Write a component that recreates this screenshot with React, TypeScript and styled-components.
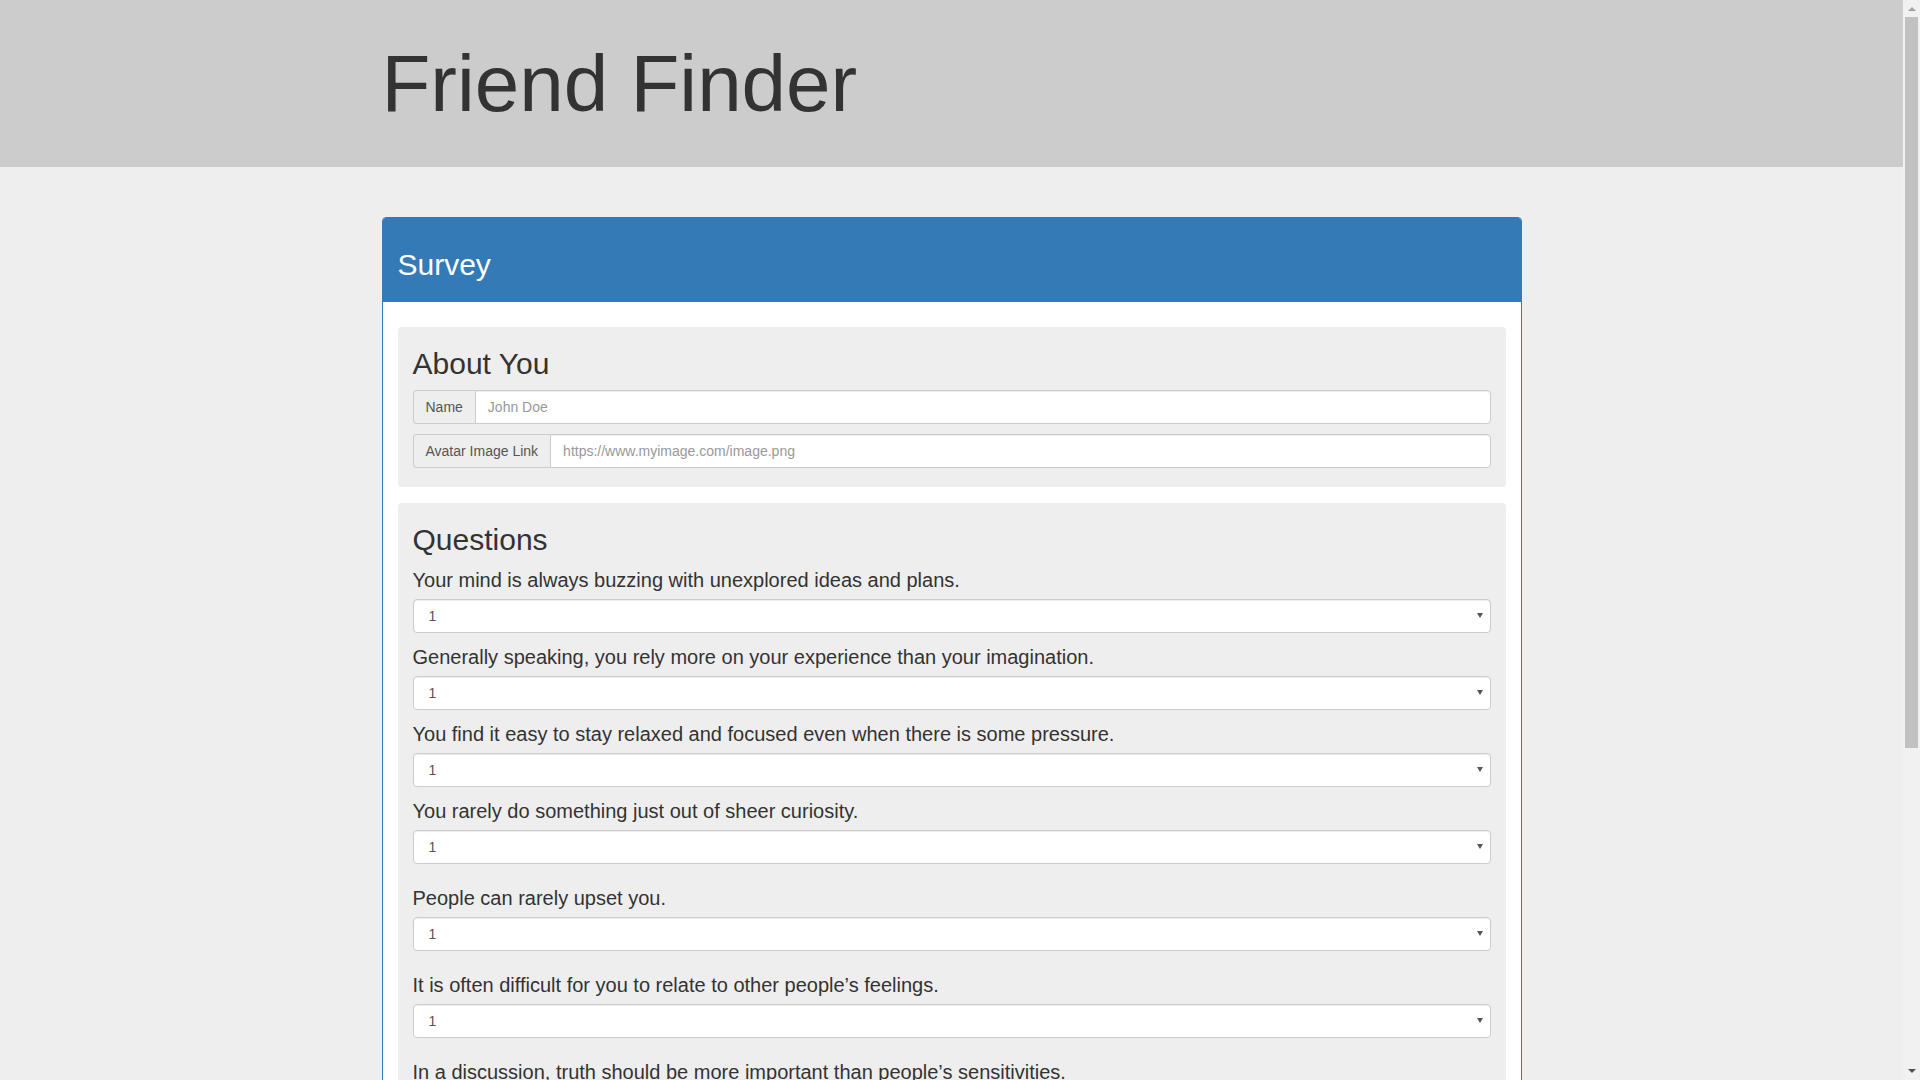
import React from "react";
import styled, { createGlobalStyle } from "styled-components";

const GlobalStyle = createGlobalStyle`
  html, body {
    margin: 0;
    padding: 0;
    background: #eeeeee;
  }
  body {
    font-family: "Liberation Sans", Arial, Helvetica, sans-serif;
    font-size: 14px;
    color: #333333;
    padding-right: 17px;
  }
  *, *::before, *::after {
    box-sizing: border-box;
  }
`;

const Jumbotron = styled.header`
  background: #cccccc;
  padding: 40px 0 39px;
  margin-bottom: 50px;
`;

const Container = styled.div`
  width: 1170px;
  margin: 0 auto;
  padding: 0 15px;
`;

const SiteTitle = styled.h1`
  margin: 0;
  font-size: 80px;
  line-height: 88px;
  font-weight: 400;
  color: #333333;
`;

const Panel = styled.section`
  background: #ffffff;
  border: 1px solid #337ab7;
  border-radius: 4px;
  margin-bottom: 62px;
`;

const PanelHeading = styled.div`
  background: #337ab7;
  color: #ffffff;
  padding: 10px 15px;
  border-bottom: 1px solid #337ab7;
  border-radius: 3px 3px 0 0;
`;

const PanelTitle = styled.h2`
  margin: 20px 0 10px;
  font-size: 30px;
  line-height: 33px;
  font-weight: 400;
`;

const PanelBody = styled.div`
  padding: 25px 15px 15px;
`;

const Well = styled.div`
  background: #eeeeee;
  border-radius: 4px;
  padding: 20px 15px 19px;
  margin-bottom: 16px;
`;

const SectionTitle = styled.h3`
  margin: 0 0 10px;
  font-size: 30px;
  line-height: 33px;
  font-weight: 400;
  color: #333333;
`;

const FieldStack = styled.div`
  display: flex;
  flex-direction: column;
  gap: 10px;
`;

const InputGroup = styled.label`
  display: flex;
  height: 34px;
`;

const Addon = styled.span`
  display: flex;
  align-items: center;
  padding: 6px 12px;
  font-size: 14px;
  color: #555555;
  background: #eeeeee;
  border: 1px solid #cccccc;
  border-right: 0;
  border-radius: 4px 0 0 4px;
  white-space: nowrap;
`;

const TextInput = styled.input`
  flex: 1;
  min-width: 0;
  height: 34px;
  padding: 6px 12px;
  font-family: inherit;
  font-size: 14px;
  color: #555555;
  background: #ffffff;
  border: 1px solid #cccccc;
  border-radius: 0 4px 4px 0;
  box-shadow: inset 0 1px 1px rgba(0, 0, 0, 0.075);
  outline: none;
  &::placeholder {
    color: #999999;
  }
`;

const Question = styled.div<{ $spaced?: boolean; $first?: boolean }>`
  display: flex;
  flex-direction: column;
  margin-top: ${(p) => (p.$first ? "0" : p.$spaced ? "20px" : "10px")};
`;

const QuestionLabel = styled.label`
  font-size: 20px;
  line-height: 28px;
  font-weight: 400;
  color: #333333;
  margin-bottom: 5px;
`;

const SelectWrap = styled.div`
  position: relative;
  &::after {
    content: "";
    position: absolute;
    right: 8px;
    top: 14px;
    width: 0;
    height: 0;
    border-left: 3px solid transparent;
    border-right: 3px solid transparent;
    border-top: 5px solid #555555;
    pointer-events: none;
  }
`;

const Select = styled.select`
  display: block;
  width: 100%;
  height: 34px;
  padding: 6px 24px 6px 15px;
  font-family: inherit;
  font-size: 14px;
  color: #555555;
  background: #ffffff;
  border: 1px solid #cccccc;
  border-radius: 4px;
  box-shadow: inset 0 1px 1px rgba(0, 0, 0, 0.075);
  appearance: none;
  -webkit-appearance: none;
  outline: none;
`;

const SubmitButton = styled.button`
  display: inline-block;
  height: 46px;
  padding: 10px 16px;
  font-family: inherit;
  font-size: 18px;
  line-height: 24px;
  color: #ffffff;
  background: #337ab7;
  border: 1px solid #2e6da4;
  border-radius: 6px;
  cursor: pointer;
`;

/* Browser-style vertical scrollbar drawn over the right edge of the viewport */
const ScrollBar = styled.div`
  position: fixed;
  top: 0;
  right: 0;
  width: 17px;
  height: 100vh;
  background: #f1f1f1;
  display: flex;
  flex-direction: column;
`;

const ScrollButton = styled.div`
  height: 17px;
  flex: none;
  display: flex;
  align-items: center;
  justify-content: center;
`;

const ScrollTrack = styled.div`
  flex: 1;
  padding: 0 2px;
`;

const ScrollThumb = styled.div`
  height: 731px;
  background: #c1c1c1;
`;

const questions = [
  "Your mind is always buzzing with unexplored ideas and plans.",
  "Generally speaking, you rely more on your experience than your imagination.",
  "You find it easy to stay relaxed and focused even when there is some pressure.",
  "You rarely do something just out of sheer curiosity.",
  "People can rarely upset you.",
  "It is often difficult for you to relate to other people\u2019s feelings.",
  "In a discussion, truth should be more important than people\u2019s sensitivities.",
  "You rarely get carried away by fantasies and ideas.",
  "You think that everyone\u2019s views should be respected regardless of whether they are supported by facts or not.",
  "You feel more energetic after spending time with a group of people.",
];

export default function App() {
  return (
    <>
      <GlobalStyle />
      <Jumbotron>
        <Container>
          <SiteTitle>Friend Finder</SiteTitle>
        </Container>
      </Jumbotron>
      <Container>
        <Panel>
          <PanelHeading>
            <PanelTitle>Survey</PanelTitle>
          </PanelHeading>
          <PanelBody>
            <Well>
              <SectionTitle>About You</SectionTitle>
              <FieldStack>
                <InputGroup>
                  <Addon>Name</Addon>
                  <TextInput type="text" placeholder="John Doe" />
                </InputGroup>
                <InputGroup>
                  <Addon>Avatar Image Link</Addon>
                  <TextInput
                    type="text"
                    placeholder="https://www.myimage.com/image.png"
                  />
                </InputGroup>
              </FieldStack>
            </Well>
            <Well>
              <SectionTitle>Questions</SectionTitle>
              {questions.map((q, i) => (
                <Question key={i} $first={i === 0} $spaced={i >= 4}>
                  <QuestionLabel htmlFor={`q${i + 1}`}>{q}</QuestionLabel>
                  <SelectWrap>
                    <Select id={`q${i + 1}`} defaultValue="1">
                      <option value="1">1</option>
                      <option value="2">2</option>
                      <option value="3">3</option>
                      <option value="4">4</option>
                      <option value="5">5</option>
                    </Select>
                  </SelectWrap>
                </Question>
              ))}
            </Well>
            <SubmitButton type="submit">Submit</SubmitButton>
          </PanelBody>
        </Panel>
      </Container>
      <ScrollBar aria-hidden="true">
        <ScrollButton>
          <svg width="8" height="5" viewBox="0 0 8 5">
            <path d="M0 5 L4 1 L8 5 Z" fill="#a3a3a3" />
          </svg>
        </ScrollButton>
        <ScrollTrack>
          <ScrollThumb />
        </ScrollTrack>
        <ScrollButton>
          <svg width="8" height="5" viewBox="0 0 8 5">
            <path d="M0 0 L8 0 L4 4 Z" fill="#505050" />
          </svg>
        </ScrollButton>
      </ScrollBar>
    </>
  );
}
